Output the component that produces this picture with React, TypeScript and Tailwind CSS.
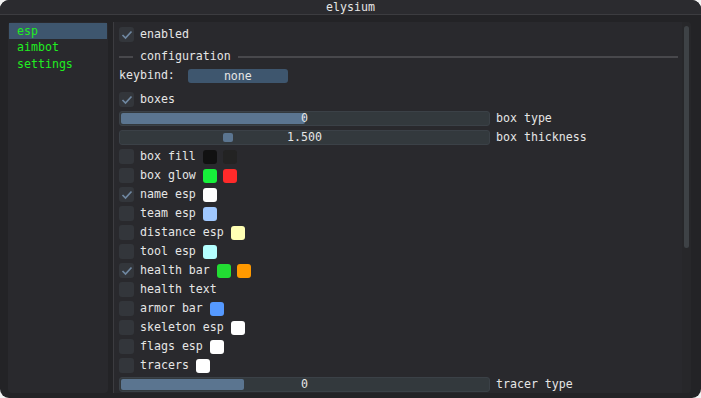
import React from 'react';

const font = { fontFamily: '"DejaVu Sans Mono", "Liberation Mono", monospace' };

function Check({ on }: { on?: boolean }) {
  return (
    <div className="w-[15px] h-[15px] rounded-[3px] bg-[#33363b] flex items-center justify-center shrink-0">
      {on && (
        <svg width="12" height="12" viewBox="0 0 12 12">
          <polyline points="1.5,6 4.5,9 10.5,2.5" fill="none" stroke="#6f87a1" strokeWidth="1.7" />
        </svg>
      )}
    </div>
  );
}

function Swatch({ color }: { color: string }) {
  return <div className="w-[14px] h-[14px] rounded-[3px] shrink-0" style={{ background: color }} />;
}

function CheckRow({ label, on, colors = [] }: { label: string; on?: boolean; colors?: string[] }) {
  return (
    <div className="flex items-center h-[15px] shrink-0">
      <Check on={on} />
      <span className="ml-[6px] leading-[15px]">{label}</span>
      {colors.map((c, i) => (
        <div key={i} className={i === 0 ? 'ml-[7px]' : 'ml-[6px]'}>
          <Swatch color={c} />
        </div>
      ))}
    </div>
  );
}

function Slider({ label, value, grab }: { label: string; value: string; grab: 'half' | 'third' | 'small' }) {
  return (
    <div className="flex items-center h-[15px] shrink-0">
      <div className="relative w-[371px] h-[15px] rounded-[3px] bg-[#33393d] border border-[#3b4147] flex items-center justify-center">
        {grab === 'half' && <div className="absolute left-[1px] top-[1px] bottom-[1px] w-[184px] rounded-[2px] bg-[#5b7590]" />}
        {grab === 'third' && <div className="absolute left-[1px] top-[1px] bottom-[1px] w-[123px] rounded-[2px] bg-[#5b7590]" />}
        {grab === 'small' && <div className="absolute left-[103px] top-[2px] bottom-[2px] w-[10px] rounded-[2px] bg-[#5b7590]" />}
        <span className="relative leading-[13px]">{value}</span>
      </div>
      <span className="ml-[6px] leading-[15px]">{label}</span>
    </div>
  );
}

export default function App() {
  return (
    <div className="w-[701px] h-[398px] bg-[#f2f2f2] text-[#e6e6e6] text-[11.6px]" style={font}>
      <div className="w-full h-full rounded-[9px] bg-[#232326] flex flex-col overflow-hidden">
        <div className="h-[15px] bg-[#2b2b2f] border-b border-[#3c3c40] flex items-center justify-center shrink-0">
          <span className="leading-[13px]">elysium</span>
        </div>
        <div className="flex-1 flex pt-[7px] pb-[5px] pl-[8px] pr-[10px] min-h-0">
          <div className="w-[100px] rounded-[4px] bg-[#29292d] p-[1px] flex flex-col">
            <div className="h-[16px] bg-[#3e566e] pl-[8px] text-[#20ee20] leading-[16px]">esp</div>
            <div className="h-[17px] pl-[8px] text-[#20ee20] leading-[17px]">aimbot</div>
            <div className="h-[17px] pl-[8px] text-[#20ee20] leading-[17px]">settings</div>
          </div>
          <div className="w-[5px]" />
          <div className="flex-1 flex bg-[#29292d] border-l border-[#3c3c40] rounded-r-[4px] min-h-0">
            <div className="flex-1 flex flex-col gap-[4px] pl-[5px] pt-[5px] overflow-hidden">
              <CheckRow label="enabled" on />
              <div className="flex items-center h-[15px] mt-[3px] shrink-0">
                <div className="w-[14px] h-[2px] bg-[#48484c]" />
                <span className="mx-[7px] leading-[15px]">configuration</span>
                <div className="flex-1 h-[2px] bg-[#48484c] mr-[4px]" />
              </div>
              <div className="flex items-center h-[15px] shrink-0">
                <span className="leading-[15px]">keybind:</span>
                <div className="ml-[13px] w-[100px] h-[14px] rounded-[3px] bg-[#3e566e] flex items-center justify-center leading-[14px]">
                  none
                </div>
              </div>
              <div className="mt-[5px]">
                <CheckRow label="boxes" on />
              </div>
              <Slider label="box type" value="0" grab="half" />
              <Slider label="box thickness" value="1.500" grab="small" />
              <CheckRow label="box fill" colors={['#111111', '#232323']} />
              <CheckRow label="box glow" colors={['#16f23a', '#ff2a2a']} />
              <CheckRow label="name esp" on colors={['#ffffff']} />
              <CheckRow label="team esp" colors={['#a0c8ff']} />
              <CheckRow label="distance esp" colors={['#ffffb4']} />
              <CheckRow label="tool esp" colors={['#b4ffff']} />
              <CheckRow label="health bar" on colors={['#22dd33', '#ff9900']} />
              <CheckRow label="health text" />
              <CheckRow label="armor bar" colors={['#5599ff']} />
              <CheckRow label="skeleton esp" colors={['#ffffff']} />
              <CheckRow label="flags esp" colors={['#ffffff']} />
              <CheckRow label="tracers" colors={['#ffffff']} />
              <Slider label="tracer type" value="0" grab="third" />
            </div>
            <div className="w-[9px] bg-[#27272a] pt-[4px] px-[2px] rounded-r-[4px]">
              <div className="h-[222px] rounded-[3px] bg-[#3e4246]" />
            </div>
          </div>
        </div>
      </div>
    </div>
  );
}
